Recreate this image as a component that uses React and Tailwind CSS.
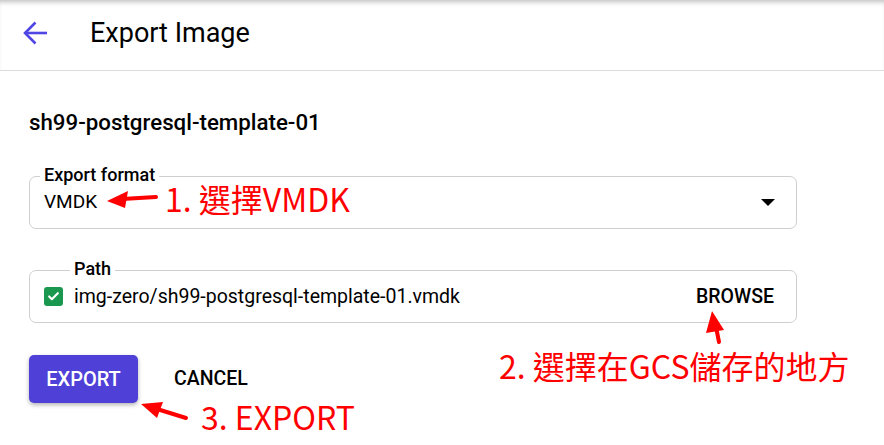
import { Check } from 'lucide-react';

const font = { fontFamily: 'Roboto, "Noto Sans CJK TC", sans-serif' };

const Annotations = () => (
    <svg className="absolute inset-0 pointer-events-none" width="884" height="445" viewBox="0 0 884 445">
        {/* arrow 1 */}
        <line x1="156" y1="197" x2="122" y2="199" stroke="#f00" strokeWidth="4" strokeLinecap="round" />
        <polygon points="107,201 128,191 125,208" fill="#f00" />
        {/* arrow 2 */}
        <line x1="719" y1="342" x2="715" y2="322" stroke="#f00" strokeWidth="4" strokeLinecap="round" />
        <polygon points="712,311 706,333 724,330" fill="#f00" />
        {/* arrow 3 */}
        <line x1="186" y1="418" x2="157" y2="409" stroke="#f00" strokeWidth="4" strokeLinecap="round" />
        <polygon points="141,404 163,402 157,418" fill="#f00" />
    </svg>
);

const Note = ({ className, children }) => (
    <span className={`absolute text-[#ff0000] text-[32px] leading-none whitespace-nowrap ${className}`} style={{ fontFamily: '"Noto Sans CJK TC", "Noto Sans", sans-serif' }}>
        {children}
    </span>
);

export default function App() {
    return (
        <div className="relative w-[884px] h-[445px] bg-white overflow-hidden text-black" style={font}>
            {/* Header */}
            <div className="h-[71px] flex items-center border-b border-[#dcdcdc] shadow-[inset_0_5px_5px_-3px_rgba(0,0,0,0.25)]">
                <svg className="ml-[22px] mt-[-4px]" width="26" height="26" viewBox="0 0 26 26" fill="none" stroke="#5046e4" strokeWidth="2.6">
                    <path d="M25 13H3" />
                    <path d="M13.5 2.5 3 13l10.5 10.5" />
                </svg>
                <h1 className="ml-[42px] mt-[-4px] text-[27px] font-normal">Export Image</h1>
            </div>

            <div className="px-[29px] pt-[36px]">
                <h2 className="text-[22.3px] font-medium leading-[30px]">sh99-postgresql-template-01</h2>

                {/* Export format */}
                <div className="relative mt-[39px] w-[768px] h-[53px] border border-[#cfcfcf] rounded-[7px] flex items-center pl-[14px] pr-[21px]">
                    <span className="absolute -top-[12px] left-[10px] px-[4px] bg-white text-[18px] font-medium leading-[20px]">Export format</span>
                    <span className="text-[19px] flex-1">VMDK</span>
                    <span className="w-0 h-0 border-x-[7px] border-x-transparent border-t-[7px] border-t-black" />
                </div>

                {/* Path */}
                <div className="relative mt-[41px] w-[768px] h-[53px] border border-[#cfcfcf] rounded-[7px] flex items-center pl-[14px] pr-[22px]">
                    <span className="absolute -top-[12px] left-[40px] px-[4px] bg-white text-[18px] font-medium leading-[20px]">Path</span>
                    <span className="w-[19px] h-[19px] rounded-[3px] bg-[#1a9850] flex items-center justify-center">
                        <Check className="size-[13px] text-white" strokeWidth={4} />
                    </span>
                    <span className="ml-[11px] text-[19.5px] flex-1">img-zero/sh99-postgresql-template-01.vmdk</span>
                    <span className="text-[19.5px] font-medium">BROWSE</span>
                </div>

                {/* Actions */}
                <div className="mt-[32px] flex items-center">
                    <button className="w-[109px] h-[48px] rounded-[5px] bg-[#4f40d8] text-white text-[20px] font-medium shadow-[0_2px_4px_rgba(0,0,0,0.3)]">
                        EXPORT
                    </button>
                    <button className="ml-[36px] text-[19.5px] font-medium">CANCEL</button>
                </div>
            </div>

            <Annotations />
            <Note className="left-[165px] top-[182px]">1. 選擇VMDK</Note>
            <Note className="left-[499px] top-[349px]">2. 選擇在GCS儲存的地方</Note>
            <Note className="left-[201px] top-[400px]">3. EXPORT</Note>
        </div>
    );
}
